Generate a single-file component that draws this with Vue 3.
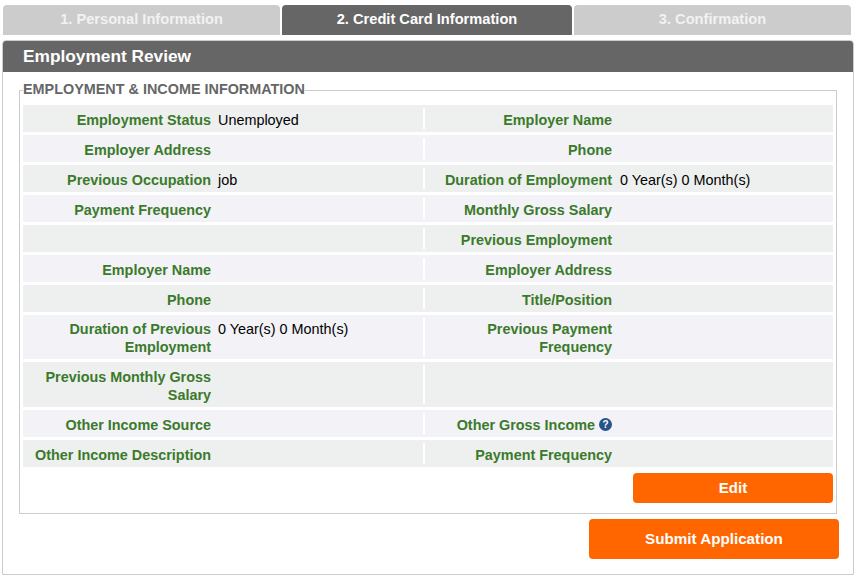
<script setup>
const tabs = [
  { text: '1. Personal Information', active: false },
  { text: '2. Credit Card Information', active: true },
  { text: '3. Confirmation', active: false }
]

const rows = [
  { l: 'Employment Status', lv: 'Unemployed', r: 'Employer Name' },
  { l: 'Employer Address', r: 'Phone' },
  { l: 'Previous Occupation', lv: 'job', r: 'Duration of Employment', rv: '0 Year(s) 0 Month(s)' },
  { l: 'Payment Frequency', r: 'Monthly Gross Salary' },
  { l: '', r: 'Previous Employment' },
  { l: 'Employer Name', r: 'Employer Address' },
  { l: 'Phone', r: 'Title/Position' },
  { l: 'Duration of Previous Employment', lv: '0 Year(s) 0 Month(s)', r: 'Previous Payment Frequency', tight: true },
  { l: 'Previous Monthly Gross Salary', r: '' },
  { l: 'Other Income Source', r: 'Other Gross Income', help: true },
  { l: 'Other Income Description', r: 'Payment Frequency' }
]
</script>

<template>
  <div class="page">
    <div class="tabs">
      <div v-for="t in tabs" :key="t.text" class="tab" :class="{ active: t.active }">{{ t.text }}</div>
    </div>
    <div class="panel">
      <div class="panel-head">Employment Review</div>
      <fieldset class="group">
        <legend>EMPLOYMENT &amp; INCOME INFORMATION</legend>
        <div class="rows">
          <div v-for="(row, i) in rows" :key="i" class="row" :class="{ tight: row.tight }">
            <div class="half">
              <div class="label">{{ row.l }}</div>
              <div class="value">{{ row.lv }}</div>
            </div>
            <div class="half right">
              <div class="label">
                {{ row.r }}
                <svg v-if="row.help" class="help" width="13" height="13" viewBox="0 0 13 13">
                  <circle cx="6.5" cy="6.5" r="6.5" fill="#28528a" />
                  <text x="6.5" y="10" text-anchor="middle" class="help-mark">?</text>
                </svg>
              </div>
              <div class="value">{{ row.rv }}</div>
            </div>
          </div>
        </div>
        <div class="edit-line">
          <button class="btn edit">Edit</button>
        </div>
      </fieldset>
      <div class="submit-line">
        <button class="btn submit">Submit Application</button>
      </div>
    </div>
  </div>
</template>

<style scoped>
.page {
  width: 857px;
  height: 580px;
  box-sizing: border-box;
  padding: 5px 0 0 2px;
  font-family: "Liberation Sans", Arial, sans-serif;
  font-size: 14.4px;
  background: #fff;
}

.tabs {
  display: grid;
  grid-template-columns: 277px 290px 277px;
  gap: 2px;
  margin-left: 1px;
}

.tab {
  height: 30px;
  line-height: 28px;
  text-align: center;
  font-size: 14.65px;
  font-weight: bold;
  color: #f2f2f2;
  background: #ccc;
  border-radius: 4px 4px 0 0;
}

.tab.active {
  color: #fff;
  background: #666;
}

.panel {
  width: 852px;
  height: 535px;
  box-sizing: border-box;
  margin-top: 5px;
  border: 1px solid #ccc;
  border-radius: 4px 4px 0 0;
}

.panel-head {
  height: 31px;
  line-height: 30px;
  padding-left: 20px;
  font-size: 17.3px;
  font-weight: bold;
  color: #fff;
  background: #666;
  border-radius: 3px 3px 0 0;
}

.group {
  width: 818px;
  box-sizing: border-box;
  margin: 9px 0 0 16px;
  padding: 6px 3px 10px 3px;
  border: 1px solid #ccc;
  min-width: 0;
}

.group legend {
  padding: 0 0 2px;
  line-height: 16px;
  font-weight: bold;
  color: #666;
}

.rows {
  display: flex;
  flex-direction: column;
  gap: 3px;
}

.row {
  display: grid;
  grid-template-columns: 400px 410px;
  padding: 3px 0;
  background: #eef0ef;
}

.row:nth-child(even) {
  background: #f2f2f7;
}

.half {
  display: flex;
  min-height: 21px;
  padding: 3px 0 0;
  box-sizing: border-box;
  line-height: 18px;
}

.row.tight .half {
  padding-top: 2px;
}

.half.right {
  box-shadow: inset 2px 0 0 #fff;
}

.label {
  width: 188px;
  flex: none;
  box-sizing: border-box;
  text-align: right;
  font-weight: bold;
  color: #3b7a2b;
}

.half.right .label {
  width: 189px;
  padding-left: 20px;
}

.value {
  margin-left: 7px;
  color: #000;
}

.half.right .value {
  margin-left: 8px;
}

.help {
  vertical-align: top;
  margin-top: 2px;
}

.help-mark {
  font-size: 10px;
  font-weight: bold;
  fill: #fff;
}

.edit-line {
  display: flex;
  justify-content: flex-end;
  margin-top: 6px;
}

.submit-line {
  display: flex;
  justify-content: flex-end;
  margin: 5px 14px 0 0;
}

.btn {
  border: none;
  border-radius: 4px;
  padding: 0 0 1px;
  font-family: inherit;
  font-weight: bold;
  color: #fff;
  background: #f60;
}

.edit {
  width: 200px;
  height: 30px;
  font-size: 15px;
}

.submit {
  width: 250px;
  height: 40px;
  font-size: 15.2px;
}
</style>
